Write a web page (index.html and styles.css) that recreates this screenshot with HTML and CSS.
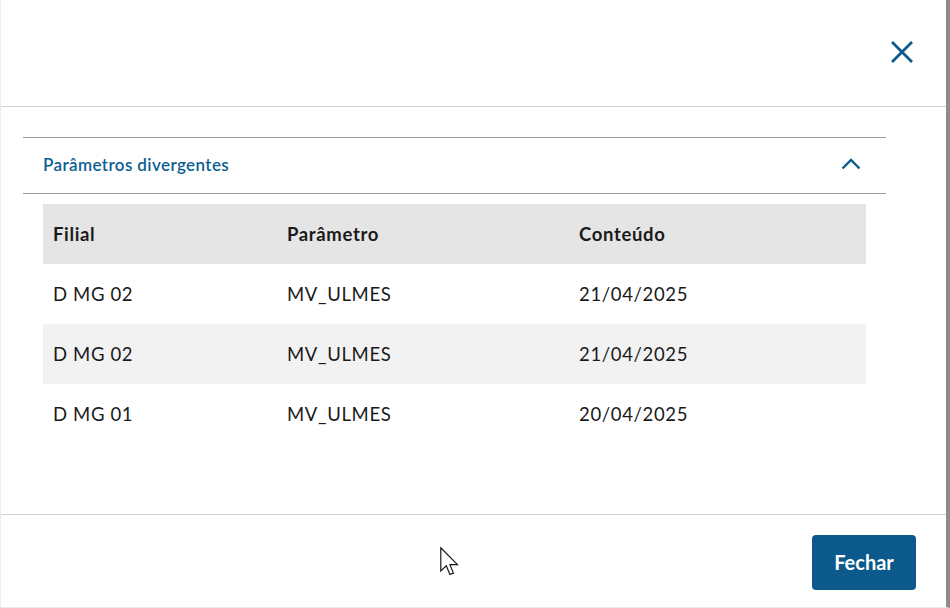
FILE: index.html
```html
<!DOCTYPE html>
<html lang="pt-BR">
<head>
<meta charset="utf-8">
<title>Parâmetros divergentes</title>
<link rel="stylesheet" href="styles.css">
</head>
<body>
<div class="frame">
  <header class="modal-header">
    <button class="close-btn" aria-label="Fechar">
      <svg width="22" height="22" viewBox="0 0 22 22"><path d="M2 2 L20 20 M20 2 L2 20" stroke="#0c5a8a" stroke-width="2.8" fill="none" stroke-linecap="square"/></svg>
    </button>
  </header>
  <main class="modal-body">
    <section class="accordion">
      <div class="acc-head">
        <span class="acc-title">Parâmetros divergentes</span>
        <svg class="chevron" width="20" height="12" viewBox="0 0 20 12"><path d="M1.5 10.5 L10 2 L18.5 10.5" stroke="#0c5a8a" stroke-width="2.4" fill="none"/></svg>
      </div>
    </section>
    <table class="grid">
      <thead>
        <tr><th class="c1">Filial</th><th class="c2">Parâmetro</th><th class="c3">Conteúdo</th></tr>
      </thead>
      <tbody>
        <tr><td>D MG 02</td><td>MV_ULMES</td><td>21/04/2025</td></tr>
        <tr class="alt"><td>D MG 02</td><td>MV_ULMES</td><td>21/04/2025</td></tr>
        <tr><td>D MG 01</td><td>MV_ULMES</td><td>20/04/2025</td></tr>
      </tbody>
    </table>
  </main>
  <footer class="modal-footer">
    <button class="primary-btn">Fechar</button>
  </footer>
  <svg class="cursor" width="19" height="29" viewBox="0 0 13 20"><path d="M0.5 0.5 L0.5 16.5 L4.3 13 L6.8 19 L9.2 18 L6.8 12.2 L12 12.2 Z" fill="#fff" stroke="#111" stroke-width="0.8" stroke-linejoin="miter"/></svg>
</div>
</body>
</html>
```

FILE: styles.css
```css
html, body {
  margin: 0;
  padding: 0;
  background: #ffffff;
}
body {
  width: 950px;
  height: 608px;
  overflow: hidden;
  font-family: "Lato", "Noto Sans", sans-serif;
  color: #1a1a1a;
}
.frame {
  position: relative;
  box-sizing: border-box;
  width: 950px;
  height: 608px;
  border-left: 1px solid #ececec;
  border-bottom: 1px solid #ececec;
  border-right: 4px solid #8c8c8c;
  display: flex;
  flex-direction: column;
}
.modal-header {
  height: 106px;
  border-bottom: 1px solid #cfcfcf;
  display: flex;
  justify-content: flex-end;
  align-items: center;
  padding-right: 33px;
}
.close-btn {
  border: 0;
  background: none;
  padding: 0;
  margin-top: -2px;
  display: flex;
}
.modal-body {
  flex: 1;
  padding: 30px 60px 0 22px;
}
.accordion {
  border-top: 1px solid #9a9a9a;
  border-bottom: 1px solid #9a9a9a;
}
.acc-head {
  height: 55px;
  display: flex;
  align-items: center;
  justify-content: space-between;
  padding: 0 25px 0 20px;
}
.acc-title {
  color: #0c5e92;
  font-size: 17px;
  font-weight: 600;
  letter-spacing: 0.4px;
  margin-top: -2px;
}
.chevron {
  margin-top: -4px;
}
.grid {
  margin: 10px 20px 0 20px;
  width: calc(100% - 40px);
  border-collapse: collapse;
  font-size: 18.5px;
  letter-spacing: 0.65px;
}
.grid th, .grid td {
  height: 60px;
  padding: 0 10px;
  text-align: left;
  vertical-align: middle;
}
.grid th {
  background: #e5e5e5;
  font-weight: 700;
  color: #1a1a1a;
}
.grid td {
  color: #1a1a1a;
}
.grid .c1 { width: 214px; }
.grid .c2 { width: 272px; }
.grid tr.alt td {
  background: #f2f2f2;
}
.modal-footer {
  height: 92px;
  border-top: 1px solid #cfcfcf;
  display: flex;
  justify-content: flex-end;
  align-items: center;
  padding-right: 30px;
}
.primary-btn {
  width: 104px;
  height: 55px;
  border: 0;
  border-radius: 4px;
  background: #0b5a8b;
  color: #ffffff;
  font-family: "Lato", sans-serif;
  font-weight: 700;
  font-size: 20px;
  margin-top: 2px;
}
.cursor {
  position: absolute;
  left: 439px;
  top: 547px;
}
```
